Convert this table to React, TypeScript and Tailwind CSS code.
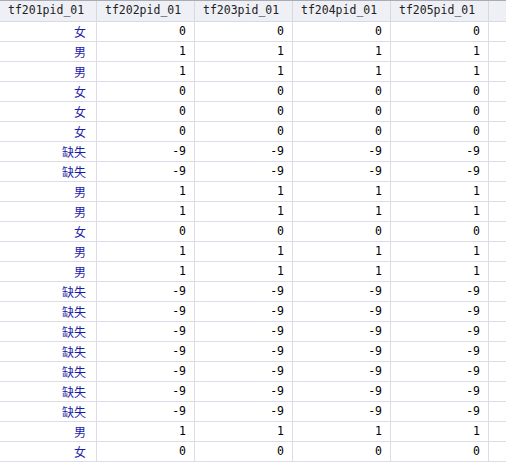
const headers = ['tf201pid_01', 'tf202pid_01', 'tf203pid_01', 'tf204pid_01', 'tf205pid_01'];

// 0 = 女, 1 = 男, -9 = 缺失
const values = [0, 1, 1, 0, 0, 0, -9, -9, 1, 1, 0, 1, 1, -9, -9, -9, -9, -9, -9, -9, 1, 0];

const labels: Record<number, string> = { 0: '女', 1: '男', [-9]: '缺失' };

export default function App() {
    return (
        <div className="h-[466px] w-[506px] overflow-hidden bg-white font-['DejaVu_Sans_Mono',monospace] text-[11.5px] text-black">
            {/* Header */}
            <div className="flex h-[22px] border-t border-b border-t-[#a9abb3] border-b-[#d6d8e2] bg-[#eef0f6]">
                {headers.map((h, i) => (
                    <div
                        key={h}
                        className={
                            (i === 0 ? 'w-[97px] ' : 'w-[98px] ') +
                            'flex shrink-0 items-center border-r border-[#d6d8e2] pl-[8px] leading-none text-[#222]'
                        }
                    >
                        {h}
                    </div>
                ))}
                <div className="flex-1" />
            </div>

            {/* Rows */}
            {values.map((v, r) => (
                <div key={r} className="flex h-[20px] border-b border-[#dcdce8]">
                    <div className="flex w-[97px] shrink-0 items-center justify-end border-r border-[#dcdce8] pr-[10px] font-['Noto_Sans_CJK_SC',sans-serif] text-[12px] leading-none text-[#1c1ca8]">
                        {labels[v]}
                    </div>
                    {[0, 1, 2, 3].map((c) => (
                        <div
                            key={c}
                            className="flex w-[98px] shrink-0 items-center justify-end border-r border-[#dcdce8] pr-[8px] leading-none"
                        >
                            {v}
                        </div>
                    ))}
                    <div className="flex-1" />
                </div>
            ))}
        </div>
    );
}
